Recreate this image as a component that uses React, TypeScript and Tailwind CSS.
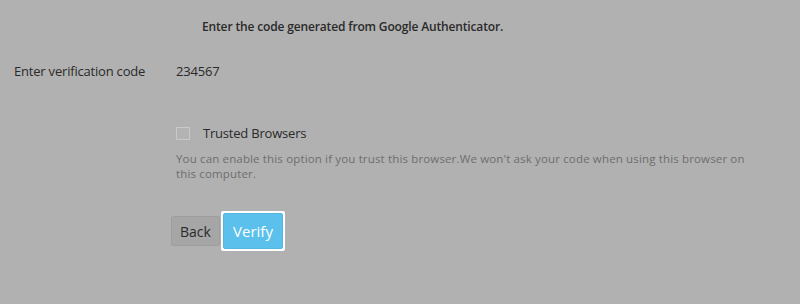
import React, { useState } from 'react';

const App: React.FC = () => {
  const [code, setCode] = useState('234567');
  const [trusted, setTrusted] = useState(false);

  return (
    <div className="w-[800px] h-[304px] bg-[#b1b1b1] font-['Open_Sans',sans-serif] text-[#2a2a2a] overflow-hidden">
      <div className="pt-[18px] pl-[202px] text-[12px] tracking-[-0.15px] font-semibold leading-[18px]">
        Enter the code generated from Google Authenticator.
      </div>

      <div className="flex items-center mt-[25px] pl-[14px] text-[13px] tracking-[-0.2px] leading-[20px]">
        <span className="w-[162px]">Enter verification code</span>
        <input
          value={code}
          onChange={(e) => setCode(e.target.value)}
          className="bg-transparent outline-none w-[120px] text-[13px] tracking-[-0.2px]"
        />
      </div>

      <div className="pl-[176px] mt-[42px]">
        <label className="flex items-center gap-[13px] text-[13px] tracking-[-0.2px] leading-[20px] cursor-pointer">
          <input
            type="checkbox"
            checked={trusted}
            onChange={(e) => setTrusted(e.target.checked)}
            className="appearance-none w-[14px] h-[13px] border border-[#c9c9c9] bg-[#b3b3b3] checked:bg-[#5bc0eb]"
          />
          Trusted Browsers
        </label>
        <p className="mt-[8px] w-[574px] text-[11.5px] tracking-[0.15px] leading-[15px] text-[#6e6e6e]">
          You can enable this option if you trust this browser.We won't ask your code when using this browser on
          this computer.
        </p>

        <div className="flex items-center mt-[30px] -ml-[5px] gap-[1px]">
          <button className="h-[30px] w-[49px] bg-[#a6a6a6] border border-[#9e9e9e] rounded-[2px] text-[14px] text-[#2a2a2a]">
            Back
          </button>
          <div className="p-[2px] bg-white rounded-[2px]">
            <button className="h-[36px] w-[60px] bg-[#5bc0eb] rounded-[2px] border border-[#54b5de] text-[15px] text-white">
              Verify
            </button>
          </div>
        </div>
      </div>
    </div>
  );
};

export default App;
